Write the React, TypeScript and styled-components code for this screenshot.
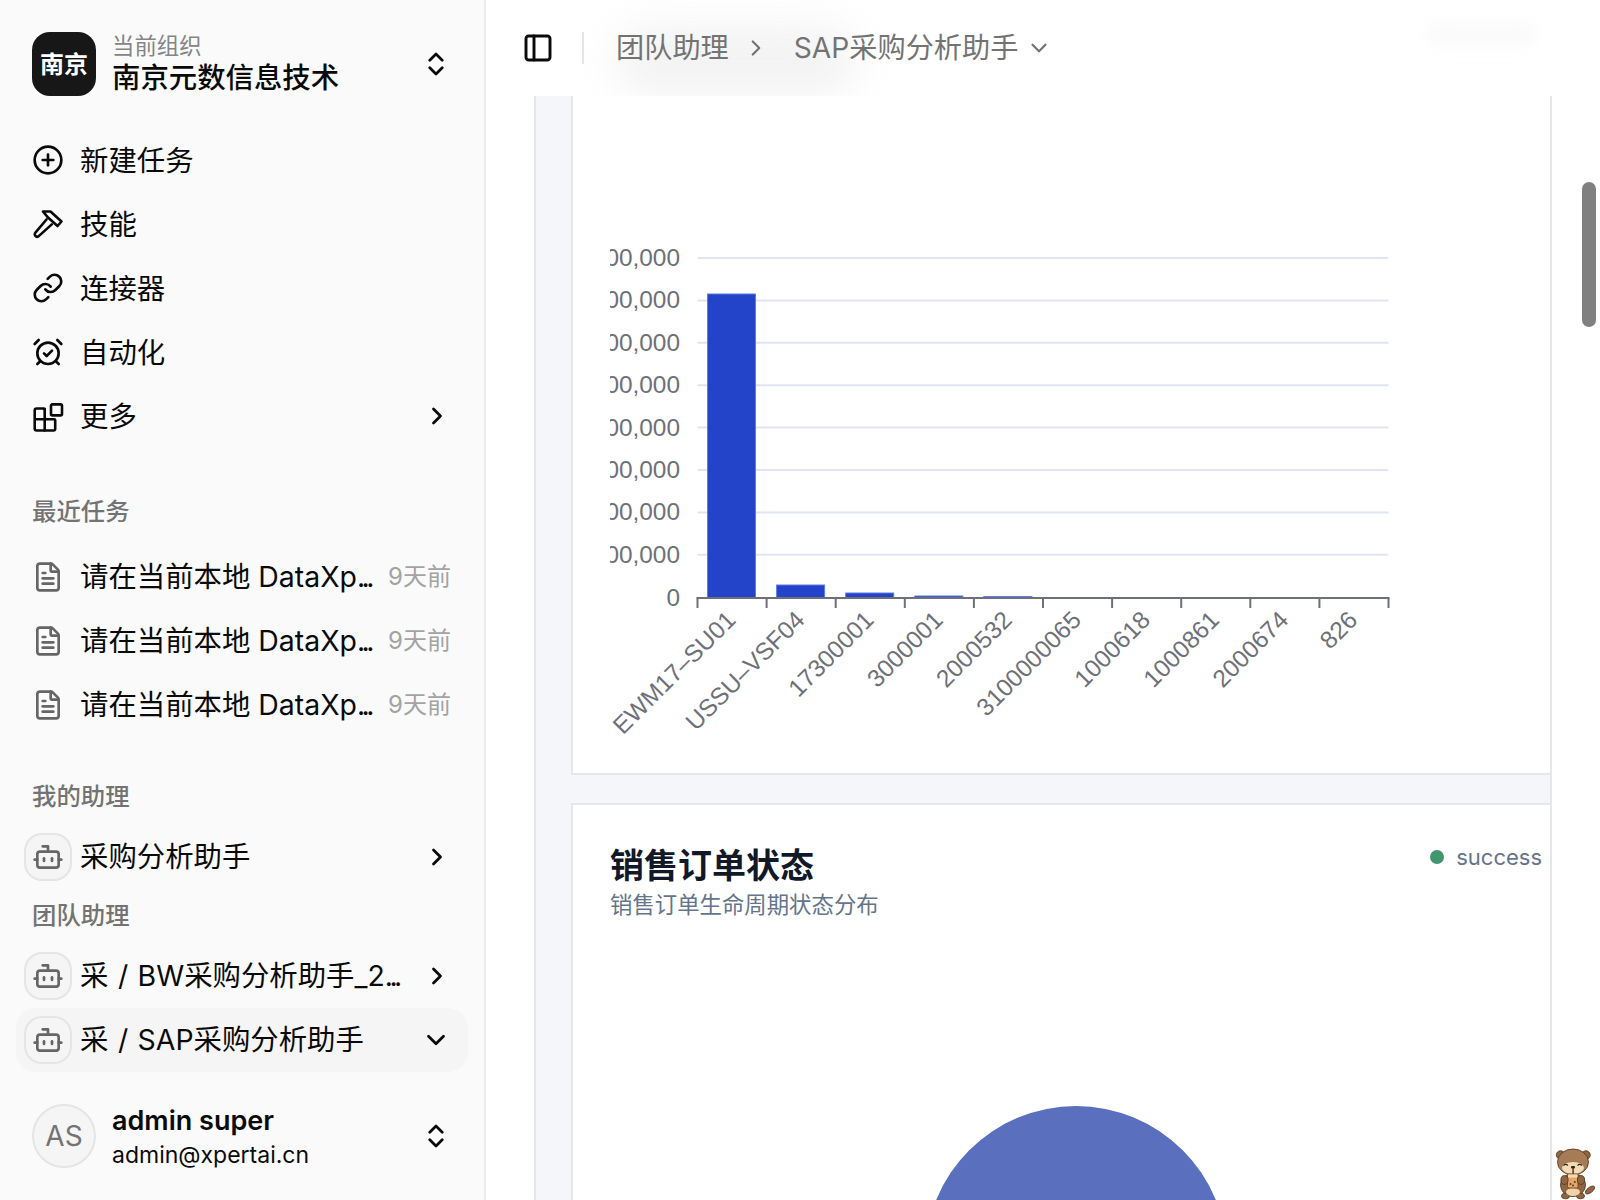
import React from "react";
import styled, { createGlobalStyle } from "styled-components";
import {
  Bot,
  ChevronDown,
  ChevronRight,
  ChevronsUpDown,
  CirclePlus,
  FileText,
  Link,
  AlarmClockCheck,
  PanelLeft,
} from "lucide-react";

const GlobalStyle = createGlobalStyle`
  html, body {
    margin: 0;
    padding: 0;
    background: #fff;
    font-family: Inter, "Noto Sans CJK SC", sans-serif;
  }
  * { box-sizing: border-box; }
`;

const HammerIcon = () => (
  <svg width="32" height="32" viewBox="1 0 32 32" fill="none" stroke="currentColor" strokeWidth="2.6" strokeLinejoin="round" strokeLinecap="round">
    <path d="M15.5 11.5 4.4 24.6a2.4 2.4 0 0 0 3.6 3.3L20.8 16.4" />
    <path d="M12 3.5h7.5L30.5 13.5l-4 4.5-9.2-8.2z" />
  </svg>
);

const BlocksIcon = () => (
  <svg width="32" height="32" viewBox="1 0 32 32" fill="none" stroke="currentColor" strokeWidth="2.6" strokeLinejoin="round" strokeLinecap="round">
    <rect x="20" y="4.4" width="11" height="11" rx="1.4" />
    <path d="M13.7 9.5a1 1 0 0 0-1-1H5.7a2 2 0 0 0-2 2v18a2 2 0 0 0 2 2h17a1.5 1.5 0 0 0 1.5-1.5v-8.8a1 1 0 0 0-1-1H3.7" />
    <path d="M13.7 9v21.4" />
  </svg>
);

const Otter = () => (
  <svg width="50" height="60" viewBox="0 0 50 60">
    <g stroke="#5c3d27" strokeWidth="0.9">
      <ellipse cx="40" cy="50" rx="5.5" ry="2.6" fill="#8f6542" transform="rotate(-38 40 50)" />
      <circle cx="10.5" cy="15" r="4.2" fill="#8f6542" />
      <circle cx="36" cy="15" r="4.2" fill="#8f6542" />
      <ellipse cx="23" cy="45" rx="12.5" ry="11.5" fill="#8f6542" />
      <ellipse cx="15.5" cy="56" rx="4" ry="2.8" fill="#8f6542" />
      <ellipse cx="30.5" cy="56" rx="4" ry="2.8" fill="#8f6542" />
      <ellipse cx="23" cy="22" rx="15.5" ry="13" fill="#a57c55" />
    </g>
    <ellipse cx="23" cy="52" rx="7" ry="4" fill="#f0d4a8" />
    <ellipse cx="23" cy="28" rx="11" ry="6" fill="#f2dcb8" />
    <path d="M13.5 25.5q2.2-2.4 4.4 0M27.5 25.5q2.2-2.4 4.4 0" fill="none" stroke="#3a2416" strokeWidth="1.2" />
    <rect x="21" y="26" width="4" height="2.4" rx="1" fill="#3a2416" />
    <rect x="22.3" y="28" width="1.6" height="8" fill="#6b3f25" />
    <rect x="17.5" y="34" width="10.5" height="14" rx="1.5" fill="#e3a868" stroke="#6b4426" strokeWidth="0.9" />
    <rect x="18" y="34.5" width="9.5" height="3" fill="#f4dcae" />
    <circle cx="20.5" cy="44" r="1" fill="#5c3d27" />
    <circle cx="24.8" cy="42" r="1" fill="#5c3d27" />
    <circle cx="23" cy="45.5" r="1" fill="#5c3d27" />
    <ellipse cx="14.5" cy="40" rx="3.6" ry="4.4" fill="#8f6542" stroke="#5c3d27" strokeWidth="0.9" />
    <ellipse cx="31" cy="40" rx="3.6" ry="4.4" fill="#8f6542" stroke="#5c3d27" strokeWidth="0.9" />
  </svg>
);

const TASKS = ["t1", "t2", "t3"];

const GRID_Y = [258, 300.4, 342.8, 385.2, 427.6, 470, 512.4, 554.8];
const X_LABELS = ["EWM17–SU01", "USSU–VSF04", "17300001", "3000001", "2000532", "3100000065", "1000618", "1000861", "2000674", "826"];
const BAR_TOPS = [294, 585, 593, 596, 596.5];
const CHART_LEFT = 697.5;
const CHART_RIGHT = 1388.5;
const STEP = 69.1;
const CHART_X = 573;

const BarChart = () => (
  <ChartSvg width="830" height="640" viewBox={`${CHART_X} 96 830 640`}>
    <defs>
      <clipPath id="chart-clip">
        <rect x="610" y="96" width="800" height="640" />
      </clipPath>
    </defs>
    <g clipPath="url(#chart-clip)">
      {GRID_Y.map((y) => (
        <line key={y} x1={CHART_LEFT} x2={CHART_RIGHT} y1={y} y2={y} stroke="#e1e5f3" strokeWidth="2" />
      ))}
      {GRID_Y.map((y) => (
        <ChartLabel key={y} x="680" y={y + 8} textAnchor="end">2,000,000</ChartLabel>
      ))}
      <ChartLabel x="680" y="606" textAnchor="end">0</ChartLabel>
      {BAR_TOPS.map((top, i) => (
        <rect
          key={i}
          x={CHART_LEFT + 10 + STEP * i}
          y={top}
          width="48"
          height={598 - top}
          fill="#2344c9"
          stroke="#5f7be6"
          strokeWidth="1"
        />
      ))}
      <line x1={CHART_LEFT - 1} x2={CHART_RIGHT + 1} y1="598" y2="598" stroke="#6e7079" strokeWidth="2" />
      {X_LABELS.map((_, i) => (
        <line key={i} x1={CHART_LEFT + STEP * i} x2={CHART_LEFT + STEP * i} y1="598" y2="608" stroke="#6e7079" strokeWidth="2" />
      ))}
      <line x1={CHART_RIGHT} x2={CHART_RIGHT} y1="598" y2="608" stroke="#6e7079" strokeWidth="2" />
      {X_LABELS.map((label, i) => {
        const x = CHART_LEFT + STEP * i + 39.5;
        return (
          <ChartLabel key={label} x={x} y="621.5" textAnchor="end" transform={`rotate(-45 ${x} 621.5)`}>
            {label}
          </ChartLabel>
        );
      })}
    </g>
  </ChartSvg>
);

export default function App() {
  return (
    <Page>
      <GlobalStyle />
      <Sidebar>
        <SwitchRow>
          <OrgLogo>南京</OrgLogo>
          <SwitchText>
            <OrgCaption>当前组织</OrgCaption>
            <OrgName>南京元数信息技术</OrgName>
          </SwitchText>
          <RowEnd><ChevronsUpDown size={30} strokeWidth={2.2} /></RowEnd>
        </SwitchRow>

        <NavList>
          <NavRow><IconSlot><CirclePlus size={32} /></IconSlot><NavLabel>新建任务</NavLabel></NavRow>
          <NavRow><IconSlot><HammerIcon /></IconSlot><NavLabel>技能</NavLabel></NavRow>
          <NavRow><IconSlot><Link size={32} /></IconSlot><NavLabel>连接器</NavLabel></NavRow>
          <NavRow><IconSlot><AlarmClockCheck size={32} /></IconSlot><NavLabel>自动化</NavLabel></NavRow>
          <NavRow>
            <IconSlot><BlocksIcon /></IconSlot>
            <NavLabel>更多</NavLabel>
            <RowEnd><ChevronRight size={28} strokeWidth={2.4} /></RowEnd>
          </NavRow>
        </NavList>

        <SectionTitle $top={47}>最近任务</SectionTitle>
        <TaskList>
          {TASKS.map((id) => (
            <NavRow key={id}>
              <IconSlot $muted><FileText size={32} /></IconSlot>
              <TaskLabel>请在当前本地 DataXp<Dots>...</Dots></TaskLabel>
              <TaskAge>9天前</TaskAge>
            </NavRow>
          ))}
        </TaskList>

        <SectionTitle $top={43}>我的助理</SectionTitle>
        <AssistantRow $first>
          <BotBadge><Bot size={32} /></BotBadge>
          <RowLabel>采购分析助手</RowLabel>
          <RowEnd><ChevronRight size={28} strokeWidth={2.4} /></RowEnd>
        </AssistantRow>

        <SectionTitle $top={10}>团队助理</SectionTitle>
        <AssistantRow $first>
          <BotBadge><Bot size={32} /></BotBadge>
          <RowLabel>采 / BW采购分析助手_2<Dots>...</Dots></RowLabel>
          <RowEnd><ChevronRight size={28} strokeWidth={2.4} /></RowEnd>
        </AssistantRow>
        <AssistantRow $active>
          <BotBadge><Bot size={32} /></BotBadge>
          <RowLabel>采 / SAP采购分析助手</RowLabel>
          <RowEnd><ChevronDown size={30} strokeWidth={2.2} /></RowEnd>
        </AssistantRow>

        <UserRow>
          <UserAvatar>AS</UserAvatar>
          <SwitchText>
            <UserName>admin super</UserName>
            <UserMail>admin@xpertai.cn</UserMail>
          </SwitchText>
          <RowEnd><ChevronsUpDown size={30} strokeWidth={2.2} /></RowEnd>
        </UserRow>
      </Sidebar>

      <Main>
        <Header>
          <Smudge />
          <FaintSmudge />
          <ToggleButton><PanelLeft size={32} strokeWidth={2.2} /></ToggleButton>
          <HeaderDivider />
          <Crumb>团队助理</Crumb>
          <CrumbSeparator><ChevronRight size={26} strokeWidth={2} /></CrumbSeparator>
          <Crumb>SAP采购分析助手</Crumb>
          <CrumbCaret><ChevronDown size={26} strokeWidth={2} /></CrumbCaret>
        </Header>

        <Content>
          <Panel>
            <ChartCard>
              <BarChart />
            </ChartCard>
            <PieCard>
              <PieHead>
                <div>
                  <CardTitle>销售订单状态</CardTitle>
                  <CardSub>销售订单生命周期状态分布</CardSub>
                </div>
                <Legend>
                  <LegendDot />
                  success
                </Legend>
              </PieHead>
              <PieWrap>
                <svg width="320" height="100" viewBox="0 0 320 100">
                  <circle cx="160" cy="151" r="151" fill="#5a6fbd" />
                </svg>
              </PieWrap>
            </PieCard>
          </Panel>
        </Content>
        <ScrollThumb />
        <OtterSpot><Otter /></OtterSpot>
      </Main>
    </Page>
  );
}

const Page = styled.div`
  display: flex;
  width: 1600px;
  height: 1200px;
  overflow: hidden;
  background: #fff;
  color: #0a0a0a;
`;

const Sidebar = styled.aside`
  flex: 0 0 486px;
  width: 486px;
  min-width: 0;
  display: flex;
  flex-direction: column;
  padding: 32px 16px 0;
  overflow: hidden;
  background: #fafafa;
  border-right: 2px solid #ececec;
`;

const SwitchRow = styled.div`
  display: flex;
  align-items: center;
  gap: 16px;
  height: 64px;
  padding: 0 6px 0 16px;
`;

const OrgLogo = styled.div`
  flex: 0 0 64px;
  height: 64px;
  display: flex;
  align-items: center;
  justify-content: center;
  padding-bottom: 4px;
  border-radius: 18px;
  background: #171717;
  color: #fff;
  font-size: 24px;
  font-weight: 700;
`;

const SwitchText = styled.div`
  flex: 1;
  min-width: 0;
  display: flex;
  flex-direction: column;
`;

const OrgCaption = styled.span`
  margin: -1px 0 1px;
  font-size: 22.4px;
  line-height: 27px;
  color: #858585;
`;

const OrgName = styled.span`
  font-size: 28.4px;
  line-height: 35px;
  font-weight: 500;
`;

const RowEnd = styled.span`
  flex: 0 0 auto;
  display: flex;
  margin-left: auto;
  margin-right: 11px;
  color: #0a0a0a;
`;

const NavList = styled.nav`
  display: flex;
  flex-direction: column;
  margin-top: 32px;
`;

const TaskList = styled.div`
  display: flex;
  flex-direction: column;
  margin-top: 17px;
`;

const NavRow = styled.div`
  display: flex;
  align-items: center;
  height: 64px;
  padding: 0 6px 0 16px;
  min-width: 0;
`;

const IconSlot = styled.span<{ $muted?: boolean }>`
  flex: 0 0 32px;
  display: flex;
  margin-right: 16px;
  color: ${(p) => (p.$muted ? "#666" : "#0a0a0a")};
`;

const RowLabel = styled.span`
  flex: 1;
  min-width: 0;
  font-size: 28.4px;
  line-height: 36px;
  word-spacing: 1.5px;
  white-space: nowrap;
`;

const NavLabel = styled(RowLabel)`
  padding-top: 2px;
`;

const TaskLabel = styled(RowLabel)`
  word-spacing: 0;
`;

const Dots = styled.span`
  letter-spacing: -3.5px;
`;

const TaskAge = styled.span`
  flex: 0 0 auto;
  margin-right: 11px;
  font-size: 24px;
  line-height: 32px;
  color: #a3a3a3;
`;

const SectionTitle = styled.div<{ $top: number }>`
  margin-top: ${(p) => p.$top}px;
  margin-bottom: 1px;
  padding: 0 16px;
  font-size: 24.4px;
  line-height: 32px;
  font-weight: 500;
  color: #737373;
`;

const AssistantRow = styled.div<{ $active?: boolean; $first?: boolean }>`
  display: flex;
  align-items: center;
  height: 64px;
  margin-top: ${(p) => (p.$first ? "12px" : "0")};
  padding: 0 6px 0 8px;
  border-radius: 20px;
  background: ${(p) => (p.$active ? "#f5f5f5" : "transparent")};
`;

const BotBadge = styled.span`
  flex: 0 0 48px;
  height: 48px;
  display: flex;
  align-items: center;
  justify-content: center;
  margin-right: 8px;
  border: 2px solid #e5e5e5;
  border-radius: 18px;
  background: #f5f5f5;
  color: #666;
`;

const UserRow = styled.div`
  display: flex;
  align-items: center;
  gap: 16px;
  height: 64px;
  margin-top: 32px;
  padding: 0 6px 0 16px;
`;

const UserAvatar = styled.div`
  flex: 0 0 64px;
  height: 64px;
  display: flex;
  align-items: center;
  justify-content: center;
  border: 2px solid #e5e5e5;
  border-radius: 50%;
  background: #f5f5f5;
  color: #737373;
  font-size: 28px;
`;

const UserName = styled.span`
  font-size: 27px;
  line-height: 35px;
  font-weight: 600;
`;

const UserMail = styled.span`
  margin-top: 2px;
  font-size: 23px;
  line-height: 30px;
`;

const Main = styled.main`
  position: relative;
  flex: 1;
  min-width: 0;
  display: flex;
  flex-direction: column;
`;

const Header = styled.header`
  position: relative;
  flex: 0 0 96px;
  display: flex;
  align-items: center;
  padding-left: 36px;
  background: #fff;
  overflow: hidden;
  color: #737373;
`;

const Smudge = styled.div`
  position: absolute;
  left: 130px;
  top: 26px;
  width: 240px;
  height: 70px;
  border-radius: 40px;
  background: #ededed;
  filter: blur(22px);
  opacity: 0.7;
`;

const FaintSmudge = styled.div`
  position: absolute;
  left: 940px;
  top: 22px;
  width: 110px;
  height: 24px;
  border-radius: 14px;
  background: #fafafa;
  filter: blur(8px);
`;

const ToggleButton = styled.span`
  position: relative;
  display: flex;
  color: #0a0a0a;
`;

const HeaderDivider = styled.span`
  position: relative;
  width: 2px;
  height: 32px;
  margin: 0 32px 0 28px;
  background: #e5e5e5;
`;

const Crumb = styled.span`
  position: relative;
  font-size: 28.2px;
  line-height: 36px;
  color: #737373;
`;

const CrumbSeparator = styled.span`
  position: relative;
  display: flex;
  margin: 0 25px 0 14px;
`;

const CrumbCaret = styled.span`
  position: relative;
  display: flex;
  margin-left: 8px;
`;

const Content = styled.div`
  flex: 1;
  min-height: 0;
  padding-left: 48px;
  padding-right: 48px;
  overflow: hidden;
`;

const Panel = styled.div`
  display: flex;
  flex-direction: column;
  gap: 28px;
  height: 100%;
  padding-left: 35px;
  border-left: 2px solid #e5e7eb;
  border-right: 2px solid #e5e7eb;
  background: #f5f6fa;
`;

const ChartCard = styled.section`
  flex: 0 0 679px;
  background: #fff;
  border-left: 2px solid #e5e7eb;
  border-bottom: 2px solid #e5e7eb;
`;

const ChartSvg = styled.svg`
  display: block;
`;

const ChartLabel = styled.text`
  font-family: "Liberation Sans", Arial, sans-serif;
  font-size: 24.4px;
  fill: #6e7079;
`;

const PieCard = styled.section`
  flex: 1;
  background: #fff;
  border-left: 2px solid #e5e7eb;
  border-top: 2px solid #e5e7eb;
  padding: 39px 8px 0 37px;
`;

const PieHead = styled.div`
  display: flex;
  justify-content: space-between;
  align-items: flex-start;
`;

const CardTitle = styled.h3`
  margin: 0;
  font-size: 34px;
  line-height: 44px;
  font-weight: 700;
  color: #111827;
`;

const CardSub = styled.p`
  margin: 1px 0 0;
  font-size: 22.4px;
  line-height: 32px;
  color: #64748b;
`;

const Legend = styled.div`
  display: flex;
  align-items: center;
  gap: 12px;
  margin-top: -1px;
  font-size: 22px;
  line-height: 28px;
  color: #64748b;
`;

const LegendDot = styled.span`
  width: 14px;
  height: 14px;
  border-radius: 50%;
  background: #42966e;
`;

const PieWrap = styled.div`
  display: flex;
  justify-content: center;
  margin: 185px 0 0 0;
`;

const ScrollThumb = styled.div`
  position: absolute;
  right: 4px;
  top: 182px;
  width: 14px;
  height: 145px;
  border-radius: 7px;
  background: #808080;
`;

const OtterSpot = styled.div`
  position: absolute;
  right: 0;
  bottom: 0;
  display: flex;
`;
